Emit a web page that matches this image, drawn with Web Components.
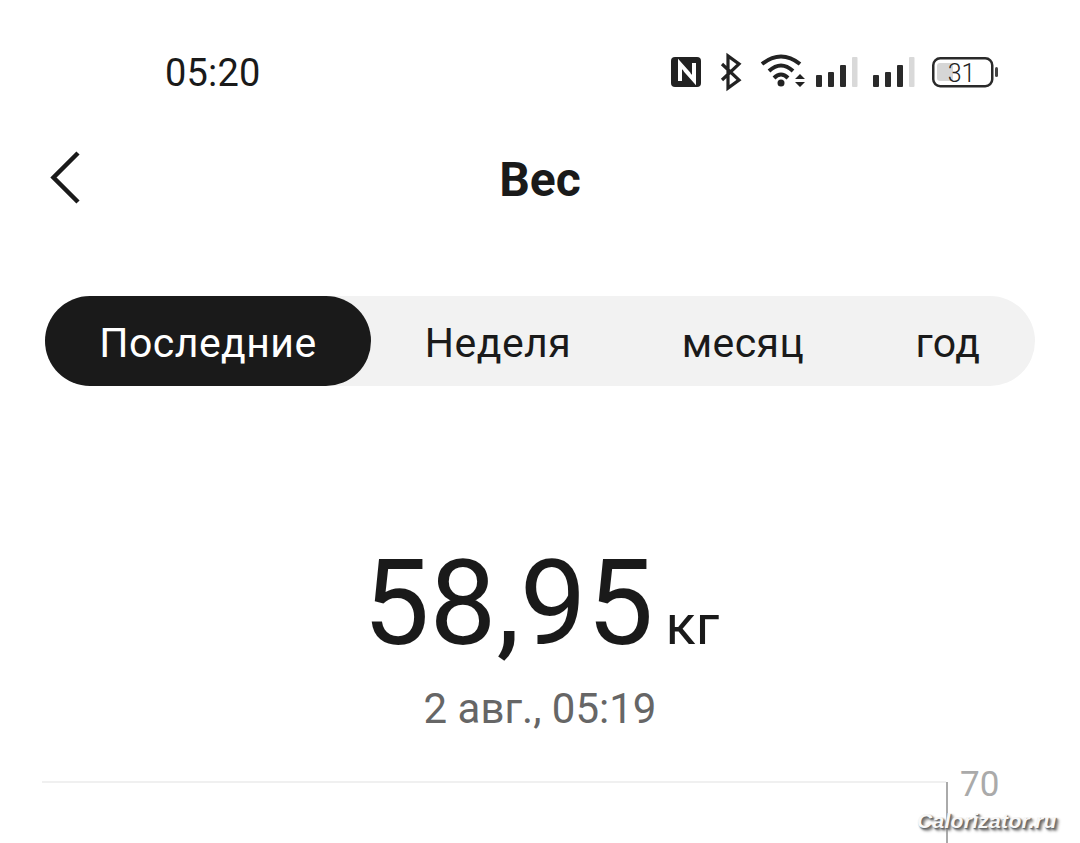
<!DOCTYPE html>
<html lang="ru">
<head>
<meta charset="utf-8">
<title>Вес</title>
<style>
  html, body { margin: 0; background: #fff; }
  body { width: 1080px; height: 843px; overflow: hidden; font-family: Roboto, "Liberation Sans", sans-serif; color: #1a1a1a; }
</style>
</head>
<body>
<status-bar></status-bar>
<title-bar>Вес</title-bar>
<segment-tabs>
  <segment-tab active width="326">Последние</segment-tab>
  <segment-tab width="254">Неделя</segment-tab>
  <segment-tab width="236">месяц</segment-tab>
  <segment-tab width="174">год</segment-tab>
</segment-tabs>
<weight-reading value="58,95" unit="кг" time="2 авг., 05:19"></weight-reading>
<chart-axis top="70"></chart-axis>

<script>
  class StatusBar extends HTMLElement {
      constructor() {
          super();
          this.attachShadow({ mode: 'open' }).innerHTML = `
      <style>
        :host { display: flex; align-items: center; justify-content: space-between; height: 46px; padding: 49px 81px 0 165px; }
        .time { padding-top: 2px; font-size: 38px; line-height: 44px; letter-spacing: 0.2px; color: #1a1a1a; }
        svg { display: block; }
      </style>
      <span class="time">05:20</span>
      <svg width="334" height="40" viewBox="0 0 334 40">
        <!-- nfc -->
        <rect x="6" y="5" width="30" height="30" rx="4" fill="#222"/>
        <path d="M15 29V12L24 22M29 11V28L20 18" fill="none" stroke="#fff" stroke-width="4"/>
        <!-- bluetooth -->
        <path d="M57 12 74 28 63 36V4L74 12 57 28" fill="none" stroke="#222" stroke-width="3.200"/>
        <!-- wifi -->
        <path d="M97 12Q116-3 135 12M104 19Q116 8 128 19M109 26Q116 19 123 26" fill="none" stroke="#222" stroke-width="4"/>
        <circle cx="116" cy="31" r="3.500" fill="#222"/>
        <path d="M130 27l5-5 5 5zM130 30h10l-5 5z" fill="#222"/>
        <!-- signal 1 -->
        <g fill="#2a2a2a">
          <rect x="151" y="23" width="6" height="12" rx="1"/>
          <rect x="163" y="20" width="6" height="15" rx="1"/>
          <rect x="175" y="13" width="6" height="22" rx="1"/>
        </g>
        <rect x="187" y="5" width="5.500" height="30" rx="1" fill="#d9d9d9"/>
        <!-- signal 2 -->
        <g fill="#2a2a2a">
          <rect x="208" y="23" width="6" height="12" rx="1"/>
          <rect x="220" y="20" width="6" height="15" rx="1"/>
          <rect x="232" y="13" width="6" height="22" rx="1"/>
        </g>
        <rect x="244" y="5" width="5.500" height="30" rx="1" fill="#d9d9d9"/>
        <!-- battery -->
        <rect x="268.250" y="6.250" width="59" height="28" rx="7" fill="#fff" stroke="#2a2a2a" stroke-width="2.500"/>
        <path d="M275 11h13v18h-13a3 3 0 0 1-3-3V14a3 3 0 0 1 3-3z" fill="#d6d6d6"/>
        <rect x="330" y="15" width="3" height="10" rx="1.500" fill="#444"/>
        <text x="296.500" y="30" font-family="Roboto, sans-serif" font-size="25" font-weight="300" fill="#222" text-anchor="middle">31</text>
      </svg>
    `;
      }
  }

  class TitleBar extends HTMLElement {
      constructor() {
          super();
          this.attachShadow({ mode: 'open' }).innerHTML = `
      <style>
        :host { display: grid; grid-template-columns: 1fr auto 1fr; align-items: center; height: 60px; margin-top: 55px; padding: 0 44px; }
        svg { display: block; }
        .title { font-size: 48px; font-weight: 700; line-height: 60px; color: #1a1a1a; }
      </style>
      <svg width="44" height="60" viewBox="0 0 44 60">
        <path d="M34 3 9.500 27.500 34 52" fill="none" stroke="#1a1a1a" stroke-width="4.500"/>
      </svg>
      <span class="title"><slot></slot></span>
      <span></span>
    `;
      }
  }

  class SegmentTabs extends HTMLElement {
      constructor() {
          super();
          this.attachShadow({ mode: 'open' }).innerHTML = `
      <style>
        :host { display: flex; height: 90px; width: 990px; margin: 86px 0 0 45px; border-radius: 45px; background: #f2f2f2; }
      </style>
      <slot></slot>
    `;
      }
  }

  class SegmentTab extends HTMLElement {
      constructor() {
          super();
          this.attachShadow({ mode: 'open' }).innerHTML = `
      <style>
        :host { display: flex; align-items: center; justify-content: center; box-sizing: border-box; height: 90px; padding-top: 3px; border-radius: 45px; font-size: 41px; letter-spacing: 0.45px; color: #1a1a1a; }
        :host([active]) { background: #1a1a1a; color: #fff; }
      </style>
      <slot></slot>
    `;
          this.style.width = this.getAttribute('width') + 'px';
      }
  }

  class WeightReading extends HTMLElement {
      constructor() {
          super();
          this.attachShadow({ mode: 'open' }).innerHTML = `
      <style>
        :host { display: flex; flex-direction: column; align-items: center; margin-top: 156px; padding-left: 2px; }
        .row { display: flex; align-items: baseline; gap: 12px; height: 124px; line-height: 124px; }
        .value { font-size: 119px; color: #1a1a1a; }
        .unit { font-size: 56px; color: #1a1a1a; }
        .time { margin: 18px 2px 0 0; font-size: 42px; line-height: 50px; color: #666; }
      </style>
      <div class="row"><span class="value"></span><span class="unit"></span></div>
      <div class="time"></div>
    `;
          this.shadowRoot.querySelector('.value').textContent = this.getAttribute('value');
          this.shadowRoot.querySelector('.unit').textContent = this.getAttribute('unit');
          this.shadowRoot.querySelector('.time').textContent = this.getAttribute('time');
      }
  }

  class ChartAxis extends HTMLElement {
      constructor() {
          super();
          this.attachShadow({ mode: 'open' }).innerHTML = `
      <style>
        :host { display: block; position: relative; height: 90px; margin-top: 20px; }
        .plot { display: flex; height: 100%; padding-left: 42px; }
        .grid { width: 904px; height: 2px; margin-top: 27px; background: #f0f0f0; }
        .scale { width: 2px; margin-top: 28px; background: #aaa; }
        .label { margin: 11px 0 0 12px; font-size: 35px; line-height: 40px; color: #aaa; }
        .mark {
          position: absolute; left: 917px; top: 55px;
          font: italic 700 21px/24px "Liberation Sans", sans-serif;
          letter-spacing: 0.3px; color: #f8f8f8;
          text-shadow: 1px 1px 1px #666, 2px 2px 2px #777, 3px 3px 3px #999;
        }
      </style>
      <div class="plot">
        <div class="grid"></div>
        <div class="scale"></div>
        <div class="label"></div>
      </div>
      <div class="mark">Calorizator.ru</div>
    `;
          this.shadowRoot.querySelector('.label').textContent = this.getAttribute('top');
      }
  }

  customElements.define('status-bar', StatusBar);
  customElements.define('title-bar', TitleBar);
  customElements.define('segment-tabs', SegmentTabs);
  customElements.define('segment-tab', SegmentTab);
  customElements.define('weight-reading', WeightReading);
  customElements.define('chart-axis', ChartAxis);
</script>
</body>
</html>
